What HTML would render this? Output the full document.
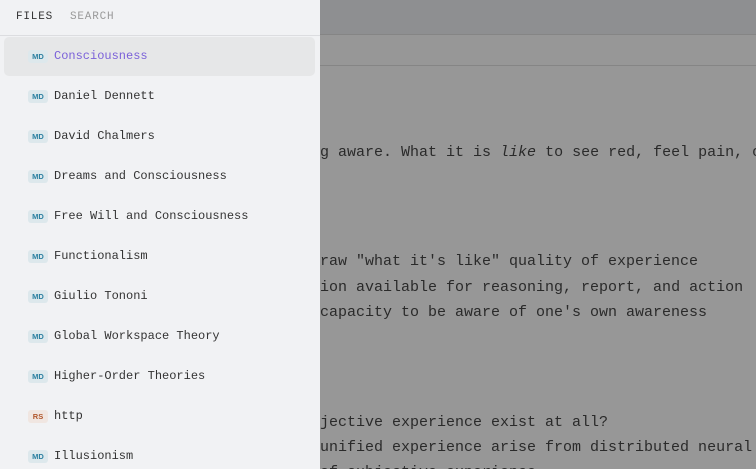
<!DOCTYPE html>
<html style="width:756px;height:469px;overflow:hidden"><head><style>
*{margin:0;padding:0;box-sizing:border-box}
body{width:756px;height:469px;overflow:hidden;background:#979797;position:relative;font-family:"Liberation Mono",monospace}
.top{position:absolute;left:0;top:0;width:756px;height:35px;background:#8e8f91;border-bottom:1px solid #858585}
.row{position:absolute;left:0;top:36px;width:756px;height:30px;border-bottom:1px solid #858585}
.t{position:absolute;font-size:15px;color:#2a2a2a;white-space:pre;line-height:18px}
.side{position:absolute;left:0;top:0;width:320px;height:469px;background:#f1f2f4;z-index:2}
.hdr{height:36px;border-bottom:1px solid #dcdde0;font-family:"Liberation Mono",monospace;font-size:11px;letter-spacing:0.8px;position:relative}
.hdr span{position:absolute;top:11px}
.it{position:absolute;left:4px;width:311px;height:39px;border-radius:5px}
.it.sel{background:#e6e7e8}
.b{position:absolute;left:24px;top:13px;width:20px;height:13px;border-radius:3px;background:#dde8ec;color:#2a7fa0;font-family:"Liberation Sans",sans-serif;font-weight:bold;font-size:7.5px;line-height:13px;text-align:center}
.b.rs{background:#f0e6e1;color:#b0562b}
.n{position:absolute;left:50px;top:11px;font-size:12px;color:#333;line-height:16px;white-space:pre}
.sel .n{color:#7b61d9}
</style></head><body>
<div class="top"></div><div class="row"></div>
<div class="t" style="left:284px;top:144px">being aware. What it is <i>like</i> to see red, feel pain, or</div>
<div class="t" style="left:320px;top:253px">raw "what it's like" quality of experience</div>
<div class="t" style="left:284px;top:279px">rmation available for reasoning, report, and action</div>
<div class="t" style="left:320px;top:304px">capacity to be aware of one's own awareness</div>
<div class="t" style="left:293px;top:414px">subjective experience exist at all?</div>
<div class="t" style="left:320px;top:439px">unified experience arise from distributed neural</div>
<div class="t" style="left:320px;top:464px">of subjective experience</div>
<div class="side">
<div class="hdr"><span style="left:16px;color:#333">FILES</span><span style="left:70px;color:#9a9a9a">SEARCH</span></div>
<div class="it sel" style="top:37px"><span class="b">MD</span><span class="n">Consciousness</span></div>
<div class="it" style="top:77px"><span class="b">MD</span><span class="n">Daniel Dennett</span></div>
<div class="it" style="top:117px"><span class="b">MD</span><span class="n">David Chalmers</span></div>
<div class="it" style="top:157px"><span class="b">MD</span><span class="n">Dreams and Consciousness</span></div>
<div class="it" style="top:197px"><span class="b">MD</span><span class="n">Free Will and Consciousness</span></div>
<div class="it" style="top:237px"><span class="b">MD</span><span class="n">Functionalism</span></div>
<div class="it" style="top:277px"><span class="b">MD</span><span class="n">Giulio Tononi</span></div>
<div class="it" style="top:317px"><span class="b">MD</span><span class="n">Global Workspace Theory</span></div>
<div class="it" style="top:357px"><span class="b">MD</span><span class="n">Higher-Order Theories</span></div>
<div class="it" style="top:397px"><span class="b rs">RS</span><span class="n">http</span></div>
<div class="it" style="top:437px"><span class="b">MD</span><span class="n">Illusionism</span></div>
</div>
</body></html>
